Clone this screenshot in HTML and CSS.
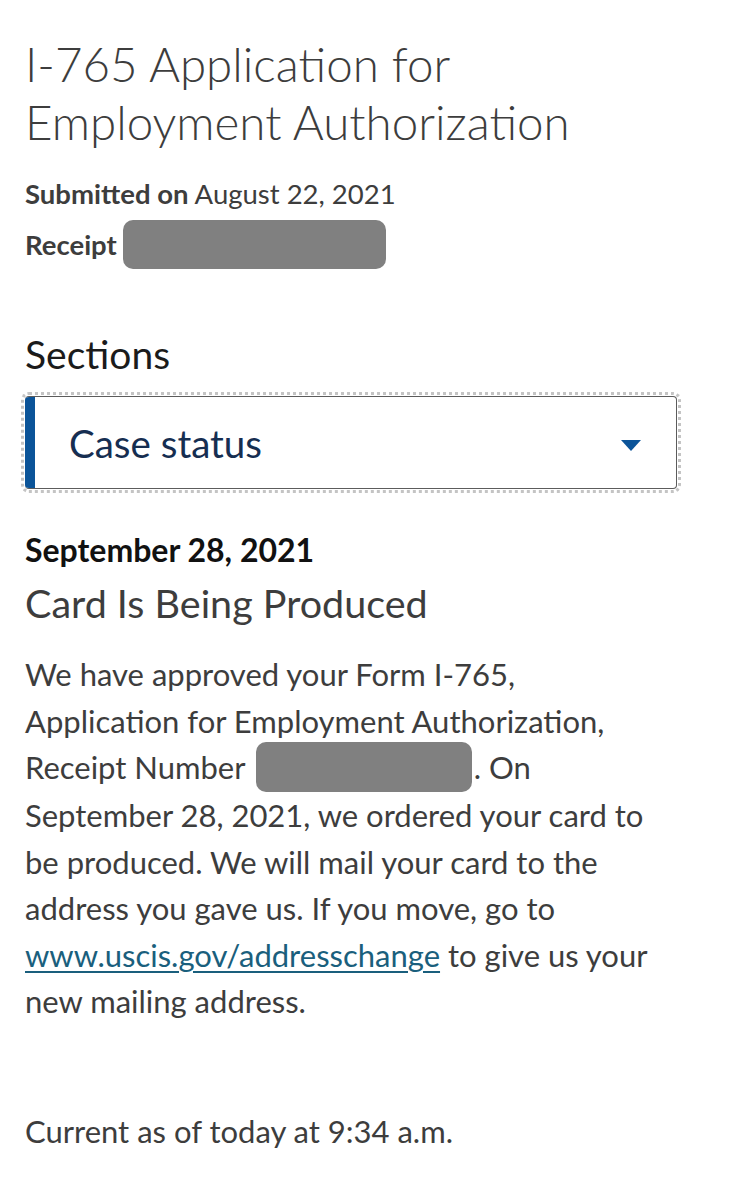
FILE: index.html
```html
<!DOCTYPE html>
<html lang="en">
<head>
<meta charset="utf-8">
<title>I-765 Case Status</title>
<link rel="stylesheet" href="styles.css">
</head>
<body>
<main class="page">
  <h1 class="title">I-765 Application for Employment Authorization</h1>
  <div class="meta">
    <p class="meta-row"><strong>Submitted on</strong> August 22, 2021</p>
    <p class="meta-row"><strong>Receipt</strong> <span class="redact redact-meta"></span></p>
  </div>

  <label class="sections-label" for="sections">Sections</label>
  <div class="select" id="sections">
    <span class="select-bar"></span>
    <span class="select-text">Case status</span>
    <svg class="select-caret" width="20" height="11" viewBox="0 0 20 11"><path d="M0 0H20L10 11Z" fill="#0b5499"/></svg>
  </div>

  <section class="status">
    <p class="status-date">September 28, 2021</p>
    <h2 class="status-title">Card Is Being Produced</h2>
    <p class="status-body">We have approved your Form I-765, Application for Employment Authorization, Receipt Number <span class="redact redact-inline"></span>. On September 28, 2021, we ordered your card to be produced. We will mail your card to the address you gave us. If you move, go to <a class="link" href="#">www.uscis.gov/addresschange</a> to give us your new mailing address.</p>
    <p class="status-current">Current as of today at 9:34 a.m.</p>
  </section>
</main>
</body>
</html>
```

FILE: styles.css
```css
* { box-sizing: border-box; }
html, body { margin: 0; padding: 0; background: #ffffff; }
body {
  font-family: Lato, "Open Sans", "Liberation Sans", sans-serif;
  color: #3d3d3d;
}
.page {
  padding: 0 52px 0 25px;
}
.title {
  margin: 35px 0 0;
  font-size: 47.5px;
  font-weight: 300;
  line-height: 58px;
  color: #3d3d3d;
}
.meta { margin-top: 17px; }
.meta-row {
  margin: 0;
  font-size: 27.5px;
  line-height: 51px;
}
.meta-row strong { font-weight: 700; }
.redact {
  display: inline-block;
  background: #808080;
  border-radius: 10px;
  vertical-align: middle;
}
.redact-meta { width: 263px; height: 49px; margin: -6px 0 -2px -1px; position: relative; top: -2px; }
.sections-label {
  display: block;
  margin-top: 60px;
  font-size: 39px;
  line-height: 48px;
  color: #1b1b1b;
}
.select {
  margin-top: 18px;
  height: 93px;
  border: 1px solid #5c5c5c;
  border-left: 0;
  border-radius: 4px;
  outline: 3px dotted #c4c4c4;
  outline-offset: 1px;
  display: flex;
  align-items: center;
  overflow: hidden;
}
.select-bar {
  align-self: stretch;
  width: 10px;
  background: #0b5499;
}
.select-text {
  flex: 1;
  padding-left: 34px;
  font-size: 38.5px;
  color: #162e51;
}
.select-caret { margin-right: 35px; margin-top: 6px; }
.status { margin-top: 43px; }
.status-date {
  margin: 0;
  font-size: 32px;
  font-weight: 700;
  line-height: 36px;
  color: #111111;
}
.status-title {
  margin: 11px 0 0;
  font-size: 39.5px;
  font-weight: 400;
  line-height: 48px;
  color: #3d3d3d;
}
.status-body {
  margin: 24px 0 0;
  max-width: 640px;
  font-size: 31px;
  line-height: 46.5px;
}
.redact-inline { width: 216px; height: 50px; margin: -4px 2px -4px 3px; position: relative; top: -4px; }
.link { color: #1a5f7d; text-decoration: underline; text-underline-offset: 4px; text-decoration-thickness: 2px; }
.status-current {
  margin: 83px 0 0;
  font-size: 31px;
  line-height: 46px;
}
```
